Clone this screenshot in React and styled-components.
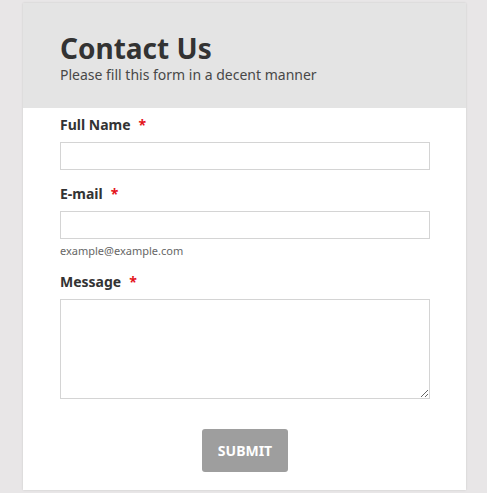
import styled, { createGlobalStyle } from "styled-components";

const Global = createGlobalStyle`
    body {
        margin: 0;
        background: #e8e6e7;
        font-family: "Noto Sans", "Open Sans", sans-serif;
    }
`

const Page = styled.div`
    padding: 3px 21px 3px 23px;
`

const Card = styled.div`
    width: 443px;
    height: 487px;
    background: #fff;
    box-shadow: 0 0 2px rgba(0, 0, 0, 0.12);
    box-sizing: border-box;
`

const Header = styled.div`
    background: #e4e4e4;
    height: 105px;
    padding: 28px 0 0 37px;
    box-sizing: border-box;
`

const Title = styled.h1`
    margin: 0;
    font-size: 28px;
    line-height: 34px;
    font-weight: 700;
    color: #333;
`

const Subtitle = styled.div`
    font-size: 14px;
    line-height: 20px;
    color: #484848;
`

const Form = styled.form`
    display: flex;
    flex-direction: column;
    padding: 7px 36px 0 37px;
`

const Field = styled.div`
    display: flex;
    flex-direction: column;
    margin-bottom: 14px;
`

const Label = styled.label`
    font-size: 14px;
    font-weight: 700;
    line-height: 20px;
    color: #333;
    margin-bottom: 7px;

    span {
        color: #e4141b;
        margin-left: 8px;
    }
`

const Input = styled.input`
    height: 28px;
    border: 1px solid #d4d4d4;
    box-sizing: border-box;
    outline: none;
`

const TextArea = styled.textarea`
    height: 100px;
    border: 1px solid #d4d4d4;
    box-sizing: border-box;
    outline: none;
`

const Hint = styled.div`
    font-size: 11px;
    color: #666;
    margin-top: 4px;
`

const Actions = styled.div`
    display: flex;
    justify-content: center;
    padding-top: 16px;
`

const Submit = styled.button`
    width: 86px;
    height: 43px;
    border: none;
    border-radius: 3px;
    background: #9e9e9e;
    color: #fff;
    font-family: inherit;
    font-size: 14px;
    font-weight: 700;
`

export default () => {
    return (
        <Page>
            <Global/>
            <Card>
                <Header>
                    <Title>Contact Us</Title>
                    <Subtitle>Please fill this form in a decent manner</Subtitle>
                </Header>
                <Form>
                    <Field>
                        <Label>Full Name<span>*</span></Label>
                        <Input/>
                    </Field>
                    <Field>
                        <Label>E-mail<span>*</span></Label>
                        <Input/>
                        <Hint>example@example.com</Hint>
                    </Field>
                    <Field>
                        <Label>Message<span>*</span></Label>
                        <TextArea/>
                    </Field>
                    <Actions>
                        <Submit type="button">SUBMIT</Submit>
                    </Actions>
                </Form>
            </Card>
        </Page>
    );
}
